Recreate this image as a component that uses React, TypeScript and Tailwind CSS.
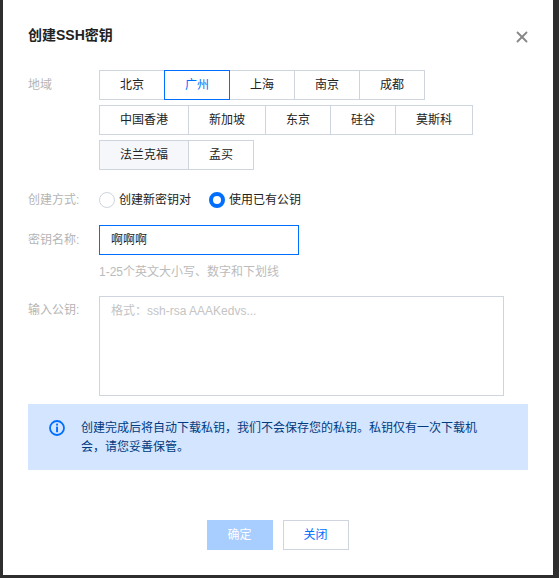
import { X } from 'lucide-react'

const rows = [
  [
    { name: '北京', width: 'w-[66px]' },
    { name: '广州', width: 'w-[66px]', selected: true },
    { name: '上海', width: 'w-[66px]' },
    { name: '南京', width: 'w-[66px]' },
    { name: '成都', width: 'w-[66px]' },
  ],
  [
    { name: '中国香港', width: 'w-[90px]' },
    { name: '新加坡', width: 'w-[78px]' },
    { name: '东京', width: 'w-[66px]' },
    { name: '硅谷', width: 'w-[66px]' },
    { name: '莫斯科', width: 'w-[78px]' },
  ],
  [
    { name: '法兰克福', width: 'w-[90px]', muted: true },
    { name: '孟买', width: 'w-[66px]' },
  ],
]

export default function App() {
  return (
    <div
      className="h-[578px] w-[559px] overflow-hidden bg-[#2e2e2e] pl-[3px] text-xs text-[#222222]"
      style={{ fontFamily: '"Liberation Sans", "Noto Sans CJK SC", sans-serif' }}
    >
      <div className="relative h-[575px] w-[550px] bg-white pl-[25px]">
        <h2 className="pt-[26px] text-sm leading-[18px] font-bold text-[#222222]">创建SSH密钥</h2>
        <button className="absolute top-[28px] right-[22px] text-[#888888]">
          <X className="h-[18px] w-[18px]" strokeWidth={2.5} />
        </button>

        {/* Region */}
        <div className="mt-[26px] flex">
          <div className="w-[71px] pt-2 leading-[14px] text-[#b5b5b5]">地域</div>
          <div className="flex flex-col gap-[5px]">
            {rows.map((row, i) => (
              <div key={i} className="flex">
                {row.map((tab, j) => (
                  <div
                    key={tab.name}
                    className={`relative flex h-[30px] items-center justify-center border ${tab.width} ${j > 0 ? 'ml-[-1px]' : ''} ${tab.selected ? 'z-10 border-[#006eff] text-[#006eff]' : 'border-[#cfd5de]'} ${tab.muted ? 'bg-[#f5f7fa]' : ''}`}
                  >
                    {tab.name}
                  </div>
                ))}
              </div>
            ))}
          </div>
        </div>

        {/* Create mode */}
        <div className="mt-[21px] flex h-[18px] items-center">
          <div className="w-[71px] text-[#b5b5b5]">创建方式:</div>
          <span className="h-4 w-4 rounded-full border border-[#cfd5de]" />
          <span className="ml-[4px]">创建新密钥对</span>
          <span className="ml-[18px] h-4 w-4 rounded-full border-[4px] border-[#006eff]" />
          <span className="ml-[4px]">使用已有公钥</span>
        </div>

        {/* Key name */}
        <div className="mt-[16px] flex items-center">
          <div className="w-[71px] text-[#b5b5b5]">密钥名称:</div>
          <div className="flex h-[30px] w-[200px] items-center border border-[#006eff] px-[11px]">啊啊啊</div>
        </div>
        <div className="mt-[10px] ml-[71px] leading-[14px] text-[#bbbbbb]">1-25个英文大小写、数字和下划线</div>

        {/* Public key */}
        <div className="mt-[17px] flex">
          <div className="w-[71px] pt-[7px] leading-[14px] text-[#b5b5b5]">输入公钥:</div>
          <div className="h-[100px] w-[405px] border border-[#cfd5de] px-[11px] pt-[7px] leading-[14px] text-[#c4c4c4]">
            格式：ssh-rsa AAAKedvs...
          </div>
        </div>

        {/* Notice */}
        <div className="mt-[8px] flex h-[66px] w-[500px] bg-[#d4e5ff] pt-[15px] pl-[21px] leading-[19px] text-[#003b80]">
          <svg viewBox="0 0 16 16" className="mt-[1px] h-4 w-4 shrink-0 text-[#006eff]" fill="none">
            <circle cx="8" cy="8" r="7" stroke="currentColor" strokeWidth="1.8" />
            <rect x="7.1" y="3.6" width="1.9" height="1.9" fill="currentColor" />
            <rect x="7.1" y="6.6" width="1.9" height="5.6" fill="currentColor" />
          </svg>
          <p className="ml-[16px] w-[400px]">创建完成后将自动下载私钥，我们不会保存您的私钥。私钥仅有一次下载机会，请您妥善保管。</p>
        </div>

        {/* Actions */}
        <div className="mt-[50px] flex justify-center gap-[10px] pr-[26px]">
          <button className="h-[30px] w-[66px] bg-[#a8cdff] text-white">确定</button>
          <button className="h-[30px] w-[66px] border border-[#cfd5de] text-[#006eff]">关闭</button>
        </div>
      </div>
    </div>
  )
}
